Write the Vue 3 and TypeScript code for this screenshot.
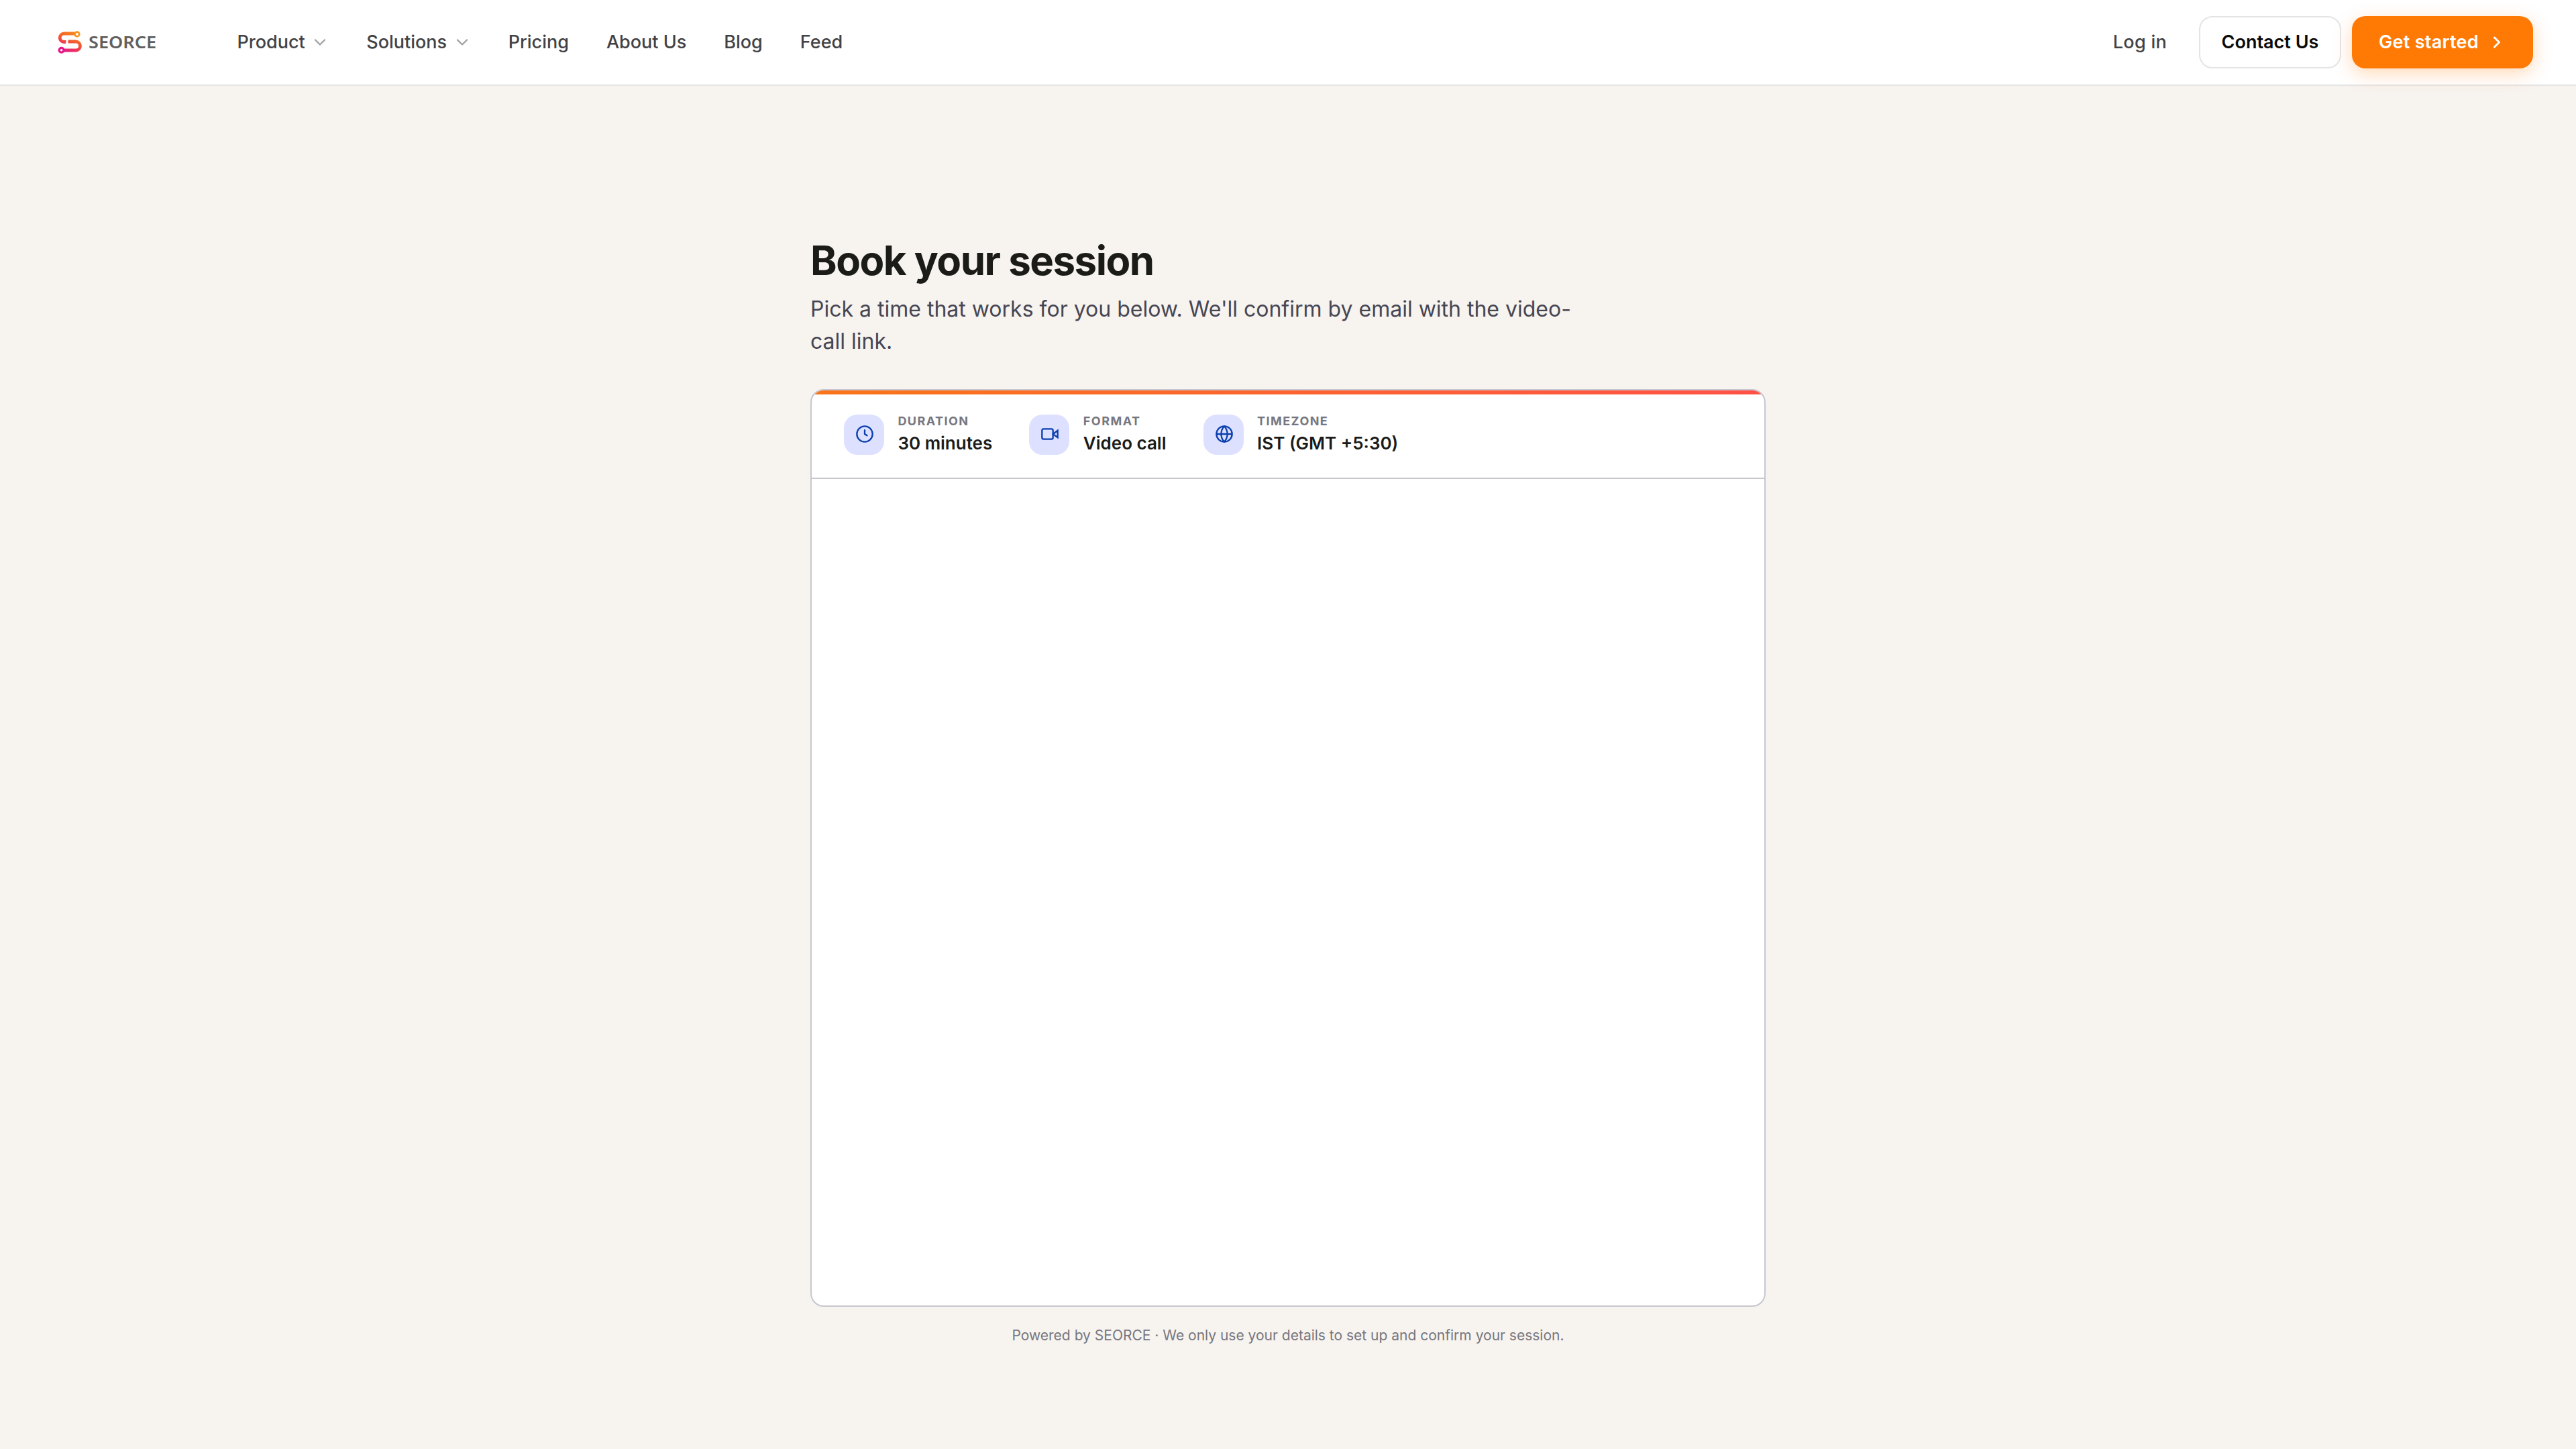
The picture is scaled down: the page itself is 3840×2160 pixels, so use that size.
<script setup lang="ts">
interface NavItem {
  label: string
  menu?: boolean
}

interface SessionFact {
  label: string
  value: string
  icon: 'clock' | 'video' | 'globe'
}

const nav: NavItem[] = [
  { label: 'Product', menu: true },
  { label: 'Solutions', menu: true },
  { label: 'Pricing' },
  { label: 'About Us' },
  { label: 'Blog' },
  { label: 'Feed' },
]

const facts: SessionFact[] = [
  { label: 'Duration', value: '30 minutes', icon: 'clock' },
  { label: 'Format', value: 'Video call', icon: 'video' },
  { label: 'Timezone', value: 'IST (GMT +5:30)', icon: 'globe' },
]
</script>

<template>
  <div class="page">
    <header class="header">
      <a class="logo" aria-label="SEORCE">
        <svg width="150" height="40" viewBox="0 0 150 40">
          <defs>
            <linearGradient id="mark" gradientUnits="userSpaceOnUse" x1="27" y1="2" x2="12" y2="36">
              <stop offset="0" stop-color="#f8931d" />
              <stop offset="0.42" stop-color="#f2622b" />
              <stop offset="0.68" stop-color="#ee3a50" />
              <stop offset="1" stop-color="#e5168a" />
            </linearGradient>
          </defs>
          <g fill="none" stroke="url(#mark)" stroke-width="4.8">
            <path d="M26 7H9.500a6 6 0 0 0 0 12.500H12.500" />
            <path d="M15.500 19H27a6.500 6.500 0 0 1 0 13H9" />
          </g>
          <path d="m14.900 16-2.600 6.500" fill="none" stroke="#fff" stroke-width="1.300" />
          <circle cx="28.900" cy="8" r="3.300" fill="#fff" stroke="#f8951f" stroke-width="2.800" />
          <circle cx="5.600" cy="31.700" r="3.400" fill="#fff" stroke="#e5168a" stroke-width="3.300" />
          <text class="wordmark" x="46" y="29.200" textLength="101" lengthAdjust="spacingAndGlyphs">SEORCE</text>
        </svg>
      </a>

      <nav class="nav">
        <a v-for="item in nav" :key="item.label" class="nav-item">
          {{ item.label }}
          <svg v-if="item.menu" class="caret" width="28" height="28" viewBox="0 0 24 24">
            <path d="m6 9 6 6 6-6" />
          </svg>
        </a>
      </nav>

      <div class="actions">
        <a class="login">Log in</a>
        <a class="btn btn-outline">Contact Us</a>
        <a class="btn btn-primary">
          <span>Get started</span>
          <svg width="28" height="28" viewBox="0 0 24 24"><path d="m9 18 6-6-6-6" /></svg>
        </a>
      </div>
    </header>

    <main class="main">
      <h1 class="title">Book your session</h1>
      <p class="lead">Pick a time that works for you below. We'll confirm by email with the video-call link.</p>

      <section class="card">
        <div class="accent"></div>
        <div class="facts">
          <div v-for="fact in facts" :key="fact.label" class="fact">
            <div class="fact-icon">
              <svg width="28" height="28" viewBox="0 0 24 24">
                <template v-if="fact.icon === 'clock'">
                  <circle cx="12" cy="12" r="10" />
                  <path d="M12 7v5l3 2" stroke-linecap="round" stroke-linejoin="round" />
                </template>
                <template v-else-if="fact.icon === 'video'">
                  <rect x="2" y="5.500" width="14" height="13" rx="2" />
                  <path d="m22 7.500-6 4.500 6 4.500z" />
                </template>
                <template v-else>
                  <circle cx="12" cy="12" r="10" />
                  <path d="M2 12h20" />
                  <path d="M12 2a15.300 15.300 0 0 1 4 10 15.300 15.300 0 0 1-4 10 15.300 15.300 0 0 1-4-10 15.300 15.300 0 0 1 4-10z" stroke-linejoin="round" />
                </template>
              </svg>
            </div>
            <div class="fact-text">
              <span class="fact-label">{{ fact.label }}</span>
              <span class="fact-value">{{ fact.value }}</span>
            </div>
          </div>
        </div>
        <div class="calendar"></div>
      </section>

      <p class="note">Powered by SEORCE · We only use your details to set up and confirm your session.</p>
    </main>
  </div>
</template>

<style>
body {
  background: #f7f3ee;
}
</style>

<style scoped>
.page {
  box-sizing: border-box;
  min-height: 2160px;
  background: #f7f3ee;
  font-family: Inter, "Liberation Sans", sans-serif;
  color: #1b1b18;
}

.header {
  box-sizing: border-box;
  height: 128px;
  display: flex;
  align-items: center;
  padding: 0 64px 0 86px;
  background: #fff;
  border-bottom: 2px solid #e4e4e4;
}

.logo {
  width: 267.5px;
  display: flex;
}

.wordmark {
  font: 600 25.5px "Noto Sans", "Open Sans", sans-serif;
  fill: #606060;
}

.nav {
  display: flex;
  gap: 56px;
}

.nav-item {
  display: flex;
  align-items: center;
  gap: 8px;
  font-size: 27px;
  font-weight: 500;
  line-height: 40px;
  color: #424245;
}

.caret {
  margin: 0 -1.2px 0 0.7px;
  fill: none;
  stroke: #a0a0a2;
  stroke-width: 2;
  stroke-linecap: round;
  stroke-linejoin: round;
}

.actions {
  margin-left: auto;
  display: flex;
  align-items: center;
  gap: 16px;
}

.login {
  margin-right: 32px;
  font-size: 27px;
  font-weight: 500;
  line-height: 40px;
  letter-spacing: 0.01em;
  color: #424245;
}

.btn {
  box-sizing: border-box;
  height: 78px;
  display: flex;
  align-items: center;
  justify-content: center;
  border-radius: 20px;
  font-size: 27px;
  font-weight: 600;
  line-height: 40px;
}

.btn-outline {
  width: 212px;
  border: 2px solid #e4e4e6;
  color: #0a0a0a;
}

.btn-primary {
  gap: 13px;
  width: 270px;
  background: #ff7a05;
  color: #fff;
  letter-spacing: 0.01em;
  box-shadow: 0 8px 28px rgba(255, 122, 5, 0.28);
}

.btn-primary svg {
  fill: none;
  stroke: currentColor;
  stroke-width: 2.5;
  stroke-linecap: round;
  stroke-linejoin: round;
}

.main {
  width: 1424px;
  margin: 0 auto;
  padding-top: 224px;
}

.title {
  margin: 0 0 13px;
  font-size: 60px;
  font-weight: 700;
  line-height: 72px;
  letter-spacing: -0.025em;
}

.lead {
  max-width: 1152px;
  margin: 0 0 47px;
  font-size: 32px;
  line-height: 48px;
  color: #464653;
}

.card {
  box-sizing: border-box;
  height: 1368px;
  display: flex;
  flex-direction: column;
  overflow: hidden;
  border: 2px solid #c6c6d0;
  border-radius: 20px;
  background: #fff;
}

.accent {
  height: 6px;
  background: linear-gradient(90deg, #f97518, #ff5147);
}

.facts {
  box-sizing: border-box;
  height: 126px;
  display: flex;
  align-items: flex-start;
  gap: 55.200px;
  padding: 30px 48px 0;
  border-bottom: 2px solid #c6c6d0;
}

.fact {
  display: flex;
  gap: 20.400px;
}

.fact-icon {
  box-sizing: border-box;
  width: 60px;
  height: 60px;
  padding: 15px 0 0 17px;
  border-radius: 20px;
  background: #dde1ff;
}

.fact-icon svg {
  display: block;
  fill: none;
  stroke: #0b3fae;
  stroke-width: 2;
}

.fact-text {
  display: flex;
  flex-direction: column;
  gap: 5px;
  margin-top: -1px;
}

.fact-label {
  font-size: 18px;
  font-weight: 700;
  line-height: 22px;
  letter-spacing: 0.08em;
  text-transform: uppercase;
  color: #767680;
}

.fact-value {
  font-size: 26px;
  font-weight: 600;
  line-height: 34px;
}

.calendar {
  flex: 1;
}

.note {
  margin: 28px 0 0;
  text-align: center;
  font-size: 21px;
  line-height: 30px;
  color: #767680;
}
</style>
